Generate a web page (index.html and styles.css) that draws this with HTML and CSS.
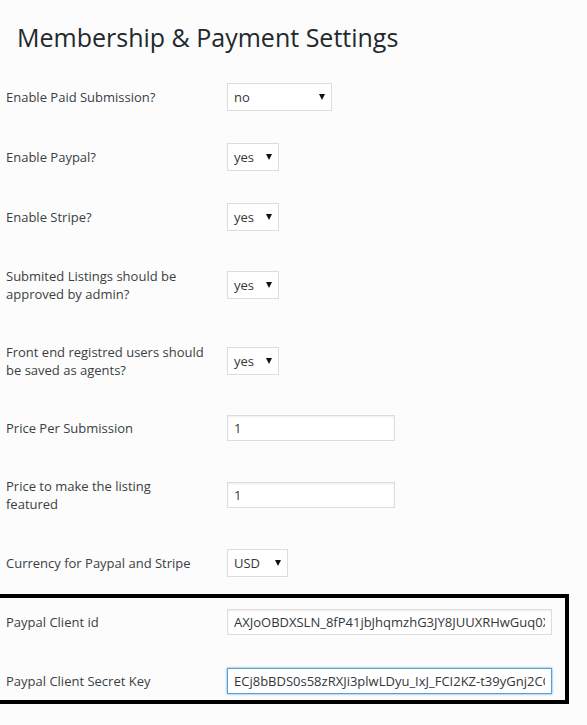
FILE: index.html
```html
<!DOCTYPE html>
<html lang="en">
<head>
<meta charset="utf-8">
<title>Membership &amp; Payment Settings</title>
<link rel="stylesheet" href="styles.css">
</head>
<body>
<div class="page">
  <h1 class="title">Membership &amp; Payment Settings</h1>

  <div class="row">
    <div class="label">Enable Paid Submission?</div>
    <div class="control"><div class="select select-wide"><span class="select-value">no</span><span class="caret"></span></div></div>
  </div>
  <div class="row">
    <div class="label">Enable Paypal?</div>
    <div class="control"><div class="select"><span class="select-value">yes</span><span class="caret"></span></div></div>
  </div>
  <div class="row">
    <div class="label">Enable Stripe?</div>
    <div class="control"><div class="select"><span class="select-value">yes</span><span class="caret"></span></div></div>
  </div>
  <div class="row">
    <div class="label">Submited Listings should be approved by admin?</div>
    <div class="control"><div class="select"><span class="select-value">yes</span><span class="caret"></span></div></div>
  </div>
  <div class="row">
    <div class="label">Front end registred users should be saved as agents?</div>
    <div class="control"><div class="select"><span class="select-value">yes</span><span class="caret"></span></div></div>
  </div>
  <div class="row">
    <div class="label">Price Per Submission</div>
    <div class="control"><input class="text-input" type="text" value="1"></div>
  </div>
  <div class="row">
    <div class="label">Price to make the listing featured</div>
    <div class="control"><input class="text-input" type="text" value="1"></div>
  </div>
  <div class="row">
    <div class="label">Currency for Paypal and Stripe</div>
    <div class="control"><div class="select select-currency"><span class="select-value">USD</span><span class="caret"></span></div></div>
  </div>

  <div class="highlight">
    <div class="row row-boxed">
      <div class="label">Paypal Client id</div>
      <div class="control"><input class="text-input text-long" type="text" value="AXJoOBDXSLN_8fP41jbJhqmzhG3JY8JUUXRHwGuq0XkTn4sQw2LrP"></div>
    </div>
    <div class="row row-boxed">
      <div class="label">Paypal Client Secret Key</div>
      <div class="control"><input class="text-input text-long is-focused" type="text" value="ECj8bBDS0s58zRXJi3plwLDyu_IxJ_FCI2KZ-t39yGnj2CQmV7hPd"></div>
    </div>
  </div>
</div>
</body>
</html>
```

FILE: styles.css
```css
* { box-sizing: border-box; }

html, body {
  margin: 0;
  padding: 0;
  background: #fcfcfc;
}

body {
  font-family: "Open Sans", "Liberation Sans", sans-serif;
  font-size: 13px;
  color: #32373c;
}

.page {
  padding-left: 6px;
}

.title {
  margin: 20px 0 12px 11px;
  font-size: 25px;
  line-height: 35px;
  font-weight: 400;
  color: #23282d;
}

.row {
  display: flex;
  align-items: center;
}

.label {
  width: 200px;
  margin-right: 21px;
  padding: 20px 0;
  line-height: 18px;
  color: #3a3f44;
}

.control {
  padding: 16px 0;
  display: flex;
  align-items: center;
}

.select {
  display: flex;
  align-items: center;
  height: 28px;
  width: 52px;
  padding: 0 6px 0 6px;
  background: #fff;
  border: 1px solid #ddd;
  color: #32373c;
  font-size: 13px;
}

.select-wide { width: 105px; }
.select-currency { width: 61px; }

.select-value {
  flex: 1;
}

.caret {
  width: 0;
  height: 0;
  border-left: 3px solid transparent;
  border-right: 3px solid transparent;
  border-top: 6px solid #111;
  margin-bottom: 1px;
}

.text-input {
  width: 168px;
  height: 26px;
  margin: 0;
  padding: 0 6px;
  border: 1px solid #ddd;
  background: #fff;
  box-shadow: inset 0 1px 2px rgba(0, 0, 0, 0.07);
  font-family: "Open Sans", "Liberation Sans", sans-serif;
  font-size: 13px;
  color: #32373c;
  outline: none;
}

.text-long { width: 325px; }

.is-focused {
  border-color: #5b9dd9;
  box-shadow: 0 0 2px rgba(30, 140, 190, 0.8);
}

.highlight {
  width: 569px;
  margin: 1px 0 0 -6px;
  padding: 11px 0 6px 6px;
  border: 4px solid #000;
  border-left: 0;
  display: flex;
  flex-direction: column;
  gap: 33px;
}

.row-boxed .label,
.row-boxed .control {
  padding: 0;
}
```
